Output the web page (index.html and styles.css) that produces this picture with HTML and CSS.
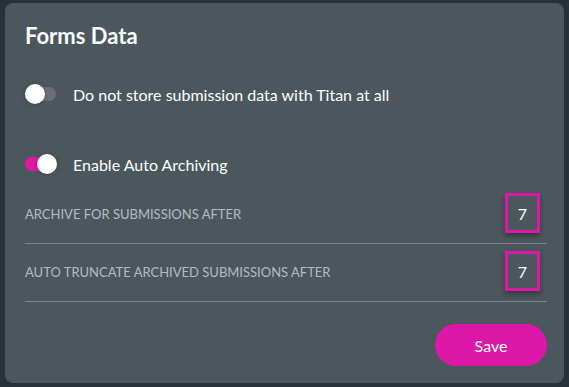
FILE: index.html
```html
<!DOCTYPE html>
<html lang="en">
<head>
  <meta charset="UTF-8">
  <title>Forms Data</title>
  <link rel="stylesheet" href="styles.css">
</head>
<body>

  <div class="panel">
    <h2 class="panel-title">Forms Data</h2>

    <div class="toggle-row">
      <span class="switch"><span class="knob"></span></span>
      <span class="toggle-label">Do not store submission data with Titan at all</span>
    </div>

    <div class="toggle-row">
      <span class="switch on"><span class="knob"></span></span>
      <span class="toggle-label">Enable Auto Archiving</span>
    </div>

    <div class="field-row">
      <span class="field-label">Archive for submissions after</span>
      <span class="num-box">7</span>
    </div>
    <div class="field-row">
      <span class="field-label">Auto truncate archived submissions after</span>
      <span class="num-box">7</span>
    </div>

    <div class="actions">
      <button class="btn-save">Save</button>
    </div>
  </div>

</body>
</html>
```

FILE: styles.css
```css
* {
  box-sizing: border-box;
}

html, body {
  height: 100%;
}

body {
  margin: 0;
  padding: 3px 5px 4px 5px;
  background: #263238;
  font-family: Lato, 'Open Sans', sans-serif;
  color: #fff;
}

.panel {
  height: 380px;
  background: #4b575d;
  border-radius: 8px;
  padding: 20px 17px 0 20px;
}

.panel-title {
  margin: 0;
  font-size: 22px;
  line-height: 26px;
  font-weight: bold;
}

.toggle-row {
  display: flex;
  align-items: center;
  height: 40px;
  gap: 17px;
  margin-top: 25px;
}

.toggle-row + .toggle-row {
  margin-top: 30px;
}

.switch {
  position: relative;
  width: 31px;
  height: 14px;
  border-radius: 7px;
  background: #6b6e78;
  flex-shrink: 0;
}

.switch.on {
  background: #e0179f;
}

.knob {
  position: absolute;
  top: -3px;
  left: 0;
  width: 20px;
  height: 20px;
  border-radius: 50%;
  background: #fff;
  box-shadow: 0 0 4px rgba(0, 0, 0, 0.25);
}

.switch.on .knob {
  left: 12px;
}

.toggle-label {
  font-size: 16px;
}

.field-row {
  display: flex;
  align-items: center;
  justify-content: space-between;
  padding: 7px 7px 10px 0;
  border-bottom: 1px solid #78848a;
  margin-top: 2px;
}

.field-row + .field-row {
  margin-top: 0;
}

.field-label {
  font-size: 13px;
  text-transform: uppercase;
  color: #b3bcc1;
  padding-top: 2px;
}

.num-box {
  width: 35px;
  height: 40px;
  border: 3px solid #dd19a4;
  display: flex;
  align-items: center;
  justify-content: center;
  font-size: 16px;
  box-shadow: 0 3px 5px rgba(0, 0, 0, 0.35);
}

.actions {
  display: flex;
  justify-content: flex-end;
  margin-top: 22px;
}

.btn-save {
  width: 112px;
  height: 42px;
  border: none;
  border-radius: 21px;
  background: #dd18a8;
  color: #fff;
  font-family: Lato, sans-serif;
  font-size: 16px;
  cursor: pointer;
}
```
